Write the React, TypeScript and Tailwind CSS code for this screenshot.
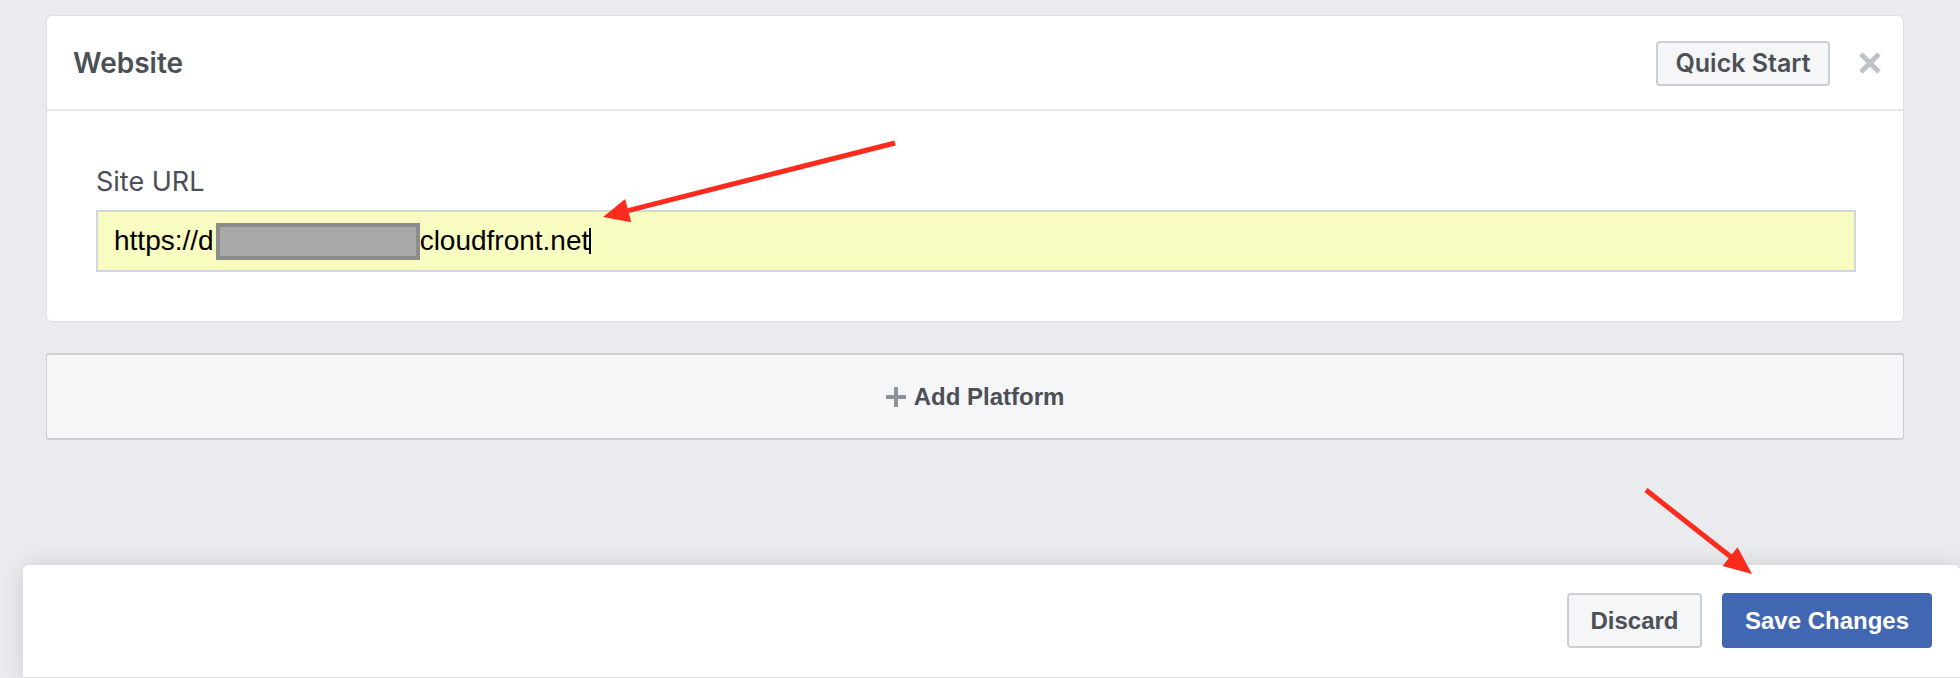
import React from "react";

function CloseIcon() {
  return (
    <svg width="26" height="22" viewBox="0 0 26 22" className="shrink-0">
      <line x1="4" y1="2" x2="22" y2="20" stroke="#bec3c9" strokeWidth="5" />
      <line x1="22" y1="2" x2="4" y2="20" stroke="#bec3c9" strokeWidth="5" />
    </svg>
  );
}

function PlusIcon() {
  return (
    <svg width="20" height="20" viewBox="0 0 20 20" className="shrink-0">
      <rect x="0" y="8" width="20" height="4" fill="#8d9199" />
      <rect x="8" y="0" width="4" height="20" fill="#8d9199" />
    </svg>
  );
}

// red callout arrows drawn over the screenshot
function Annotations() {
  return (
    <svg
      className="pointer-events-none absolute inset-0 z-10"
      width="1960"
      height="678"
      viewBox="0 0 1960 678"
    >
      <line x1="895" y1="143" x2="628" y2="210.6" stroke="#fb2c1d" strokeWidth="5" />
      <polygon points="603,217 631.2,222.2 625.2,199" fill="#fb2c1d" />
      <line x1="1646" y1="490" x2="1731" y2="557" stroke="#fb2c1d" strokeWidth="5" />
      <polygon points="1752,574 1722.5,566 1737.5,547.2" fill="#fb2c1d" />
    </svg>
  );
}

export default function App() {
  return (
    <div className="relative h-[678px] w-full overflow-hidden bg-[#e9ebee] font-['Liberation_Sans',Arial,sans-serif] text-[#4b4f56]">
      <div className="pt-[15px] pl-[46px] pr-[56px]">
        {/* Website platform card */}
        <section className="rounded-[6px] border border-[#dddfe2] bg-white">
          <div className="flex h-[95px] items-center justify-between border-b-2 border-[#e5e6e9] pl-[26px] pr-[20px]">
            <h2 className="font-['Inter',sans-serif] text-[28px] font-semibold leading-[32px] text-[#4b4f56]">
              Website
            </h2>
            <div className="flex items-center gap-[27px]">
              <button className="mt-[2px] flex h-[45px] w-[174px] items-center justify-center rounded-[4px] border-2 border-[#ccd0d5] bg-[#f5f6f7] font-['Inter',sans-serif] text-[25px] font-semibold text-[#4b4f56]">
                Quick Start
              </button>
              <CloseIcon />
            </div>
          </div>
          <div className="pt-[55px] pb-[49px] pl-[49px] pr-[47px]">
            <label className="block font-['Inter',sans-serif] text-[27px] leading-[32px] text-[#4b4f56]">
              Site URL
            </label>
            <div className="mt-[12px] flex h-[62px] items-center border-2 border-[#d3d6db] bg-[#f8fcc0] pl-[16px] text-[28px] leading-[32px] text-black">
              <span>https://d</span>
              <span className="ml-[2px] inline-block h-[37px] w-[204px] border-4 border-[#8c8c8c] bg-[#a9a9a9]" />
              <span>cloudfront.net</span>
              <span className="inline-block h-[26px] w-[2px] bg-black" />
            </div>
          </div>
        </section>

        {/* Add Platform */}
        <button className="mt-[31px] flex h-[87px] w-full items-center justify-center gap-[8px] rounded-[3px] border-x border-y-2 border-[#ccd0d5] bg-[#f5f6f7]">
          <PlusIcon />
          <span className="text-[24px] font-bold text-[#4b4f56]">Add Platform</span>
        </button>
      </div>

      {/* bottom save bar */}
      <div className="mt-[125px] ml-[23px] flex h-[114px] items-start justify-end gap-[20px] rounded-t-[6px] border-b-2 border-[#dddfe2] bg-white pt-[28px] pr-[28px] shadow-[0_0_24px_rgba(0,0,0,0.12)]">
        <button className="h-[55px] w-[135px] rounded-[4px] border-2 border-[#ccd0d5] bg-[#f5f6f7] text-[24px] font-bold text-[#4b4f56]">
          Discard
        </button>
        <button className="h-[55px] w-[210px] rounded-[4px] bg-[#4267b2] text-[24px] font-bold text-white">
          Save Changes
        </button>
      </div>

      <Annotations />
    </div>
  );
}
